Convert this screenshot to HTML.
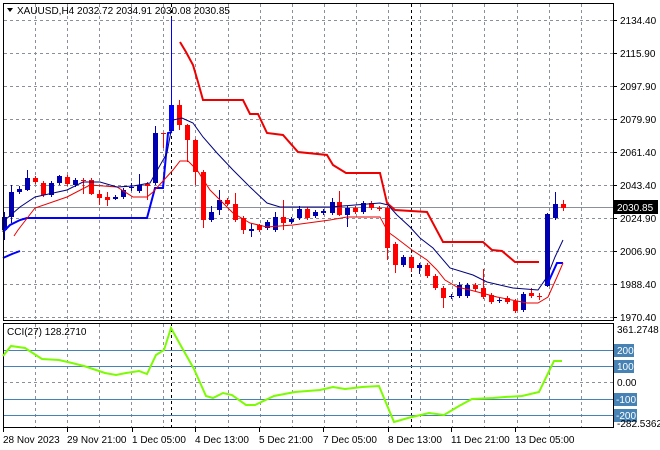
<!DOCTYPE html>
<html><head><meta charset="utf-8"><style>
html,body{margin:0;padding:0;background:#fff;}
svg{display:block;font-family:"Liberation Sans",Tahoma,sans-serif;font-size:10px;}
</style></head><body>
<svg id="s" width="660" height="450" viewBox="0 0 660 450" xmlns="http://www.w3.org/2000/svg">
<rect width="660" height="450" fill="#fff"/>
<g id="grid" stroke="#8a8f99" stroke-width="1" stroke-dasharray="3,3" fill="none"></g>
<line x1="3" y1="207.5" x2="613" y2="207.5" stroke="#8a8f99"/>
<line x1="171.5" y1="4" x2="171.5" y2="320" stroke="#000" stroke-dasharray="3,3"/>
<line x1="411.5" y1="4" x2="411.5" y2="320" stroke="#000" stroke-dasharray="3,3"/>
<line x1="171.5" y1="323" x2="171.5" y2="428" stroke="#000" stroke-dasharray="3,3"/>
<line x1="411.5" y1="323" x2="411.5" y2="428" stroke="#000" stroke-dasharray="3,3"/>
<g id="c"></g>
<polyline fill="none" stroke="#e00" stroke-width="2" points="180,42 186,52 193,65 198,82 203,100 243,100 250,114 258,114 267,133 283,135 298,152 327,155 333,165 346,173 380,173 387,203 395,210 427,212 443,242 483,242 492,250 502,251 515,262 539,262"/>
<polyline fill="none" stroke="#00f" stroke-width="2" points="3,258 12,254 20,251"/>
<polyline fill="none" stroke="#00f" stroke-width="2" points="3,232 10,225 20,220 27,218 147,218 155,188 163,188 168,133 172,132"/>
<polyline fill="none" stroke="#00f" stroke-width="2" points="547,285 557,263 563,263"/>
<polyline fill="none" stroke="#e00" stroke-width="1" points="14,236 18,230 35,208 67,197 90,185 117,187 133,197 147,197 153,192 173,170 180,161 188,161 197,170 210,190 233,213 250,223 267,227 293,225 330,220 347,217 380,217 388,232 395,237 412,250 427,260 437,270 445,280 457,287 470,290 497,297 527,303 538,303 548,297 557,277 563,263"/>
<polyline fill="none" stroke="#000080" stroke-width="1" points="3,232 5,220 20,207 35,197 67,190 83,182 100,182 117,187 133,186 150,183 167,153 173,120 182,118 193,123 203,137 217,153 233,170 250,187 267,203 280,207 330,207 380,203 388,205 397,215 410,227 420,238 433,248 450,268 473,275 487,282 513,288 538,290 547,277 555,257 563,240"/>
<!-- frames -->
<rect x="3.5" y="3.5" width="610" height="317" fill="none" stroke="#000"/>
<rect x="3.5" y="323.5" width="610" height="104" fill="none" stroke="#000"/>
<!-- CCI levels -->
<g stroke="#4682b4"><line x1="4" y1="350.5" x2="613" y2="350.5"/><line x1="4" y1="366.5" x2="613" y2="366.5"/><line x1="4" y1="399.5" x2="613" y2="399.5"/><line x1="4" y1="415.5" x2="613" y2="415.5"/></g>
<line x1="4" y1="382.5" x2="613" y2="382.5" stroke="#8a8f99" stroke-dasharray="3,3"/>
<polyline fill="none" stroke="#7cfc00" stroke-width="2" points="3,356 11,346 25,348 42,359 59,360 72,363 84,366 105,373 116,375 126,373 139,371 147,374 156,355 164,350 171,328 181,346 194,369 206,396 213,398 223,393 232,395 246,405 255,405 274,396 295,392 320,390 333,387 345,389 362,387 379,386 394,422 408,418 429,413 444,415 459,406 472,399 493,398 505,397 522,396 539,392 554,361 562,361"/>
<!-- texts -->
<path d="M7,8 L13,8 L10,12 Z" fill="#000"/>
<text x="17" y="14" fill="#000">XAUUSD,H4  2032.72 2034.91 2030.08 2030.85</text>
<text x="7" y="335" fill="#000">CCI(27) 128.2710</text>
<g id="pl" fill="#000"></g>
<rect x="613" y="200" width="45" height="14" fill="#000"/>
<text x="617" y="211" fill="#fff">2030.85</text>
<text x="617" y="333">361.2748</text>
<rect x="614" y="344" width="20" height="13" fill="#4682b4"/><text x="617" y="354" fill="#fff">200</text>
<rect x="614" y="360" width="20" height="13" fill="#4682b4"/><text x="617" y="370" fill="#fff">100</text>
<text x="617" y="386">0.00</text>
<rect x="614" y="393" width="23" height="13" fill="#4682b4"/><text x="616" y="403" fill="#fff">-100</text>
<rect x="614" y="409" width="23" height="13" fill="#4682b4"/><text x="616" y="419" fill="#fff">-200</text>
<text x="617" y="427">-282.5362</text>
<g id="tl" fill="#000"></g>
</svg>
<script>
var NS="http://www.w3.org/2000/svg";
function el(p,t,a,txt){var e=document.createElementNS(NS,t);for(var k in a)e.setAttribute(k,a[k]);if(txt)e.textContent=txt;document.getElementById(p).appendChild(e);}
var vx=[];for(var x=35;x<613;x+=32.1)vx.push(Math.round(x)+0.5);
vx.forEach(function(x){el("grid","line",{x1:x,y1:4,x2:x,y2:320});el("grid","line",{x1:x,y1:324,x2:x,y2:427});});
var hy=[20,53,86,119,152,185,218,251,284,317];
var pl=["2134.40","2115.90","2097.90","2079.90","2061.40","2043.40","2024.90","2006.90","1988.40","1970.40"];
hy.forEach(function(y,i){el("grid","line",{x1:4,y1:y+0.5,x2:613,y2:y+0.5});if(i!=6||true)el("pl","text",{x:620,y:y+4},pl[i]);el("pl","line",{x1:613,y1:y+.5,x2:617,y2:y+.5,stroke:"#000"});});
// candles: x, bodyTop, bodyBot, high, low, bull
var C=[[4,217,230,212,240,1],[11,192,217,185,223,1],[19,189,192,186,194,1],[27,178,190,170,191,1],[35,178,182,176,184,0],[43,183,195,181,197,0],[51,183,195,181,197,1],[59,176,183,175,185,1],[67,177,184,175,186,0],[75,180,185,178,187,1],[83,180,181,178,194,0],[91,180,194,178,195,0],[99,194,198,190,205,0],[107,197,200,192,206,0],[115,197,199,195,200,1],[123,190,197,188,199,1],[131,187,188,183,191,1],[139,185,191,174,193,1],[147,184,186,182,200,0],[155,133,183,126,185,1],[163,133,134,133,148,0],[171,105,131,18,133,1],[179,105,125,100,130,0],[187,125,140,124,162,0],[195,140,172,139,185,0],[203,172,220,170,228,0],[211,212,220,206,222,1],[219,200,210,190,215,1],[227,200,204,198,206,0],[235,204,220,193,222,0],[243,218,230,216,234,0],[251,229,231,223,237,1],[259,225,230,224,232,0],[267,222,228,220,230,1],[275,217,230,212,232,1],[283,217,223,200,230,0],[291,219,222,217,224,1],[299,209,218,206,220,1],[307,209,218,207,220,0],[315,212,216,210,218,1],[323,211,213,209,215,1],[332,202,213,198,215,1],[339,202,215,191,216,0],[347,208,215,206,227,1],[355,208,212,206,214,0],[363,203,212,201,214,1],[371,203,208,201,210,0],[379,208,209,206,211,0],[387,208,248,206,260,0],[395,244,265,242,273,0],[403,257,265,255,267,1],[411,257,268,255,272,0],[419,265,268,263,274,1],[427,265,276,263,278,0],[435,276,288,274,290,0],[443,288,298,286,308,0],[451,296,297,294,299,1],[459,285,296,282,298,1],[467,285,296,283,298,1],[475,285,289,283,291,0],[483,288,297,269,299,0],[491,295,302,293,304,0],[499,300,301,298,303,1],[507,298,302,296,304,0],[515,301,311,299,313,0],[523,294,310,292,312,1],[531,293,296,288,298,0],[539,296,297,293,300,0],[547,214,286,213,287,1],[555,204,218,192,220,1],[563,204,208,200,211,0]];
C.forEach(function(c){var col=c[5]?"#0000b0":"#ff0000";if(c[5]&&c[0]==171)col="#0000ff";
el("c","line",{x1:c[0]+.5,y1:c[3],x2:c[0]+.5,y2:c[4],stroke:col});
el("c","rect",{x:c[0]-2,y:c[1],width:5,height:Math.max(1,c[2]-c[1]),fill:col});});
var T=[["28 Nov 2023",3],["29 Nov 21:00",67],["1 Dec 05:00",132],["4 Dec 13:00",195],["5 Dec 21:00",259],["7 Dec 05:00",323],["8 Dec 13:00",388],["11 Dec 21:00",451],["13 Dec 05:00",515]];
T.forEach(function(t){el("tl","text",{x:t[1],y:443},t[0]);el("tl","line",{x1:t[1]+.5,y1:428,x2:t[1]+.5,y2:432,stroke:"#000"});});
</script>
</body></html>
